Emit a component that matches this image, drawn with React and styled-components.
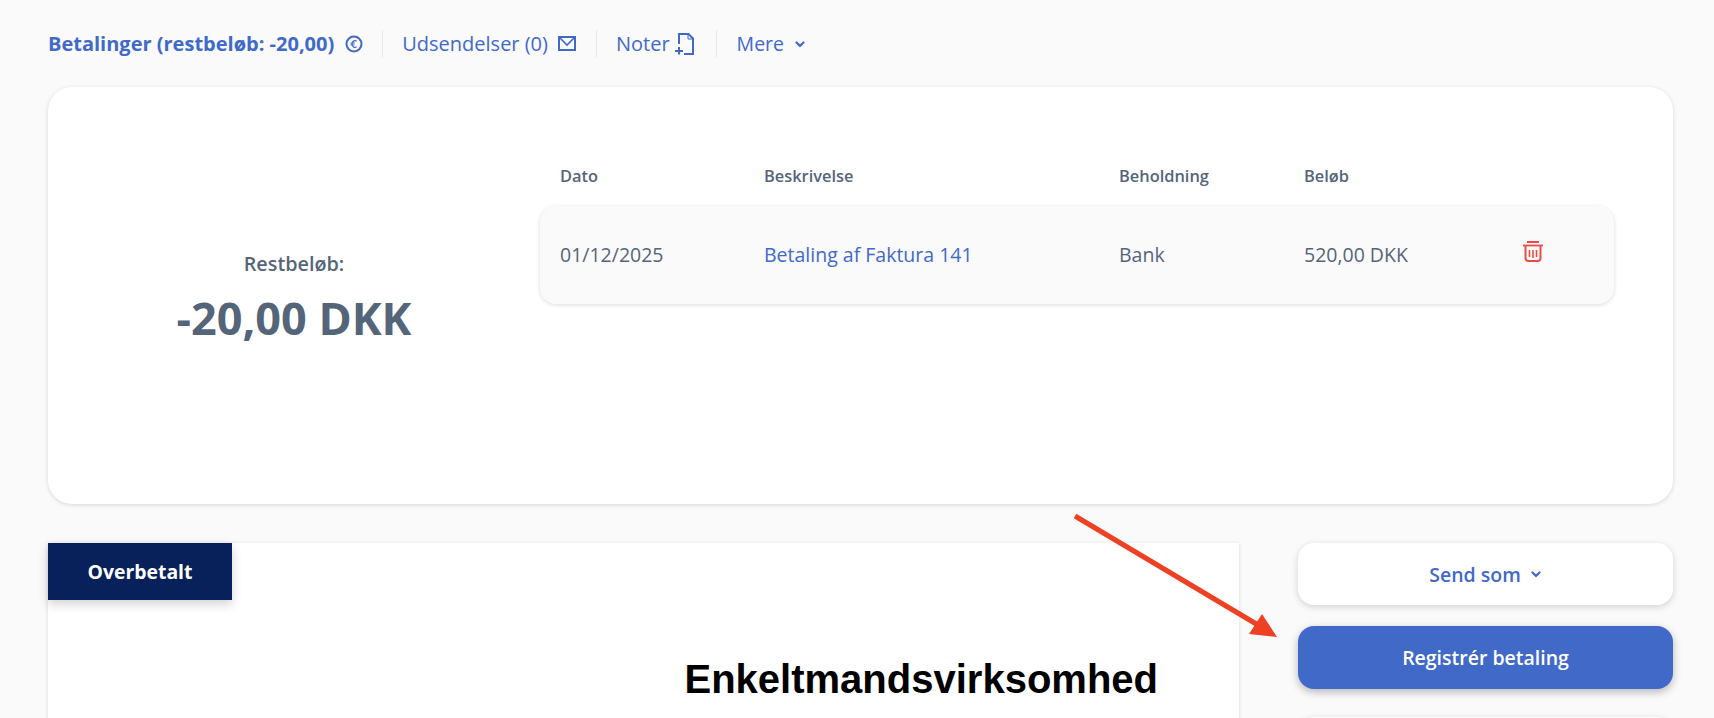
import React from "react";
import styled, { createGlobalStyle } from "styled-components";

const Global = createGlobalStyle`
  html, body { margin: 0; padding: 0; background: #fafafa; }
  body { font-family: "Open Sans", "Noto Sans", sans-serif; color: #556579; }
  * { box-sizing: border-box; }
`;

const Page = styled.div`
  position: relative;
  height: 718px;
  overflow: hidden;
  padding: 30px 41px 0 48px;
  background: #fafafa;
`;

const Tabs = styled.nav`
  display: flex;
  align-items: center;
  height: 27px;
  margin-bottom: 30px;
`;

const Tab = styled.a`
  display: flex;
  align-items: center;
  gap: ${(p) => p.$gap || 10}px;
  height: 27px;
  font-size: ${(p) => p.$size || 20}px;
  font-weight: ${(p) => (p.$active ? 700 : 400)};
  color: #4169c8;
  padding-left: ${(p) => (p.$first ? 0 : p.$pl || 20)}px;
  padding-right: ${(p) => (p.$last ? 0 : p.$pr || 20)}px;
  border-right: ${(p) => (p.$last ? "none" : "1px solid #e8e8e8")};
  white-space: nowrap;
`;

const Card = styled.section`
  display: grid;
  grid-template-columns: 492px 1fr;
  height: 417px;
  padding: 0 59px 0 0;
  background: #fff;
  border-radius: 24px;
  box-shadow: 0 1px 4px rgba(0, 0, 0, 0.14);
`;

const Summary = styled.div`
  display: flex;
  flex-direction: column;
  align-items: center;
  padding: 165px 0 0 0;
`;

const SummaryLabel = styled.div`
  font-size: 19.8px;
  font-weight: 600;
  line-height: 24px;
  margin-bottom: 11px;
`;

const SummaryValue = styled.div`
  font-size: 45px;
  font-weight: 700;
  line-height: 62px;
`;

const TableWrap = styled.div`
  padding-top: 79px;
`;

const columns = "204px 355px 185px 1fr";

const HeadRow = styled.div`
  display: grid;
  grid-template-columns: ${columns};
  padding-left: 20px;
  height: 40px;
  font-size: 16.4px;
  font-weight: 600;
  line-height: 20px;
`;

const Row = styled.div`
  display: grid;
  grid-template-columns: ${columns};
  align-items: center;
  height: 98px;
  padding: 0 0 2px 20px;
  background: #fafafa;
  border-radius: 16px;
  box-shadow: 0 1px 4px rgba(0, 0, 0, 0.14);
  font-size: 19.5px;
`;

const Link = styled.span`
  color: #4169c8;
`;

const AmountCell = styled.div`
  display: flex;
  align-items: center;
  svg {
    margin-top: -5px;
  }
`;

const Amount = styled.span`
  width: 219px;
`;

const Lower = styled.div`
  display: grid;
  grid-template-columns: 1191px 375px;
  gap: 59px;
  margin-top: 39px;
`;

const Doc = styled.article`
  position: relative;
  height: 400px;
  background: #fff;
  box-shadow: 0 1px 4px rgba(0, 0, 0, 0.14);
  padding: 113px 81px 0 0;
  text-align: right;
`;

const Ribbon = styled.div`
  position: absolute;
  left: 0;
  top: 0;
  width: 184px;
  height: 57px;
  display: flex;
  align-items: center;
  justify-content: center;
  background: #08215a;
  color: #fff;
  font-size: 19.4px;
  font-weight: 700;
  box-shadow: 0 4px 10px rgba(0, 0, 0, 0.18);
`;

const Company = styled.h1`
  margin: 0;
  font-family: "Liberation Sans", Arial, sans-serif;
  font-size: 40px;
  font-weight: 700;
  line-height: 46px;
  color: #000;
`;

const Side = styled.aside`
  display: flex;
  flex-direction: column;
  gap: 21px;
`;

const ActionButton = styled.button`
  display: flex;
  align-items: center;
  justify-content: center;
  gap: 9px;
  flex: none;
  width: 100%;
  height: ${(p) => (p.$primary ? 63 : 62)}px;
  margin-top: ${(p) => p.$offset || 0}px;
  border: none;
  border-radius: 16px;
  font-family: inherit;
  font-size: 19.5px;
  font-weight: 600;
  color: ${(p) => (p.$primary ? "#fff" : "#4169c8")};
  background: ${(p) => (p.$primary ? "#4169c8" : "#fff")};
  box-shadow: ${(p) =>
    p.$primary ? "0 3px 8px rgba(0,0,0,0.28)" : "0 2px 7px rgba(0,0,0,0.16)"};
`;

const ArrowLayer = styled.svg`
  position: absolute;
  left: 0;
  top: 0;
  pointer-events: none;
`;

const Chevron = ({ size = 12 }) => (
  <svg width={size} height={size} viewBox="0 0 12 12" fill="none" stroke="#4169c8" strokeWidth="2.2" strokeLinecap="round" strokeLinejoin="round">
    <path d="M2.5 4.5 6 8l3.5-3.5" />
  </svg>
);

const EuroIcon = () => (
  <svg width="18" height="18" viewBox="0 0 18 18" fill="none" stroke="#4169c8">
    <circle cx="9" cy="9" r="7.5" strokeWidth="2" />
    <path d="M11.6 6.2C10 4.9 7.5 5.7 7 9c.4 3.4 3 4.1 4.6 2.8M5.4 8h4.4M5.4 10h4" strokeWidth="1.2" />
  </svg>
);

const MailIcon = () => (
  <svg width="18" height="15" viewBox="0 0 18 15" fill="none" stroke="#4169c8" strokeWidth="2">
    <rect x="1" y="1" width="16" height="13" />
    <path d="M1.5 1.5 9 9l7.5-7.5" strokeWidth="1.6" />
  </svg>
);

const NoteIcon = () => (
  <svg width="19" height="22" viewBox="0 0 19 22" fill="none" stroke="#4169c8" strokeWidth="2">
    <path d="M4 11V1h9.5L18 5.5V21H9" />
    <path d="M13 1v5h5" strokeWidth="1" />
    <path d="M4 14v7.5M0 18h8" />
  </svg>
);

const TrashIcon = () => (
  <svg width="20" height="21" viewBox="0 0 20 21" fill="none" stroke="#ee4b46">
    <path d="M4 1h12" strokeWidth="2" />
    <path d="M0 4.5h20" strokeWidth="1.8" />
    <path d="M2.5 5v12a3 3 0 0 0 3 3h9a3 3 0 0 0 3-3V5" strokeWidth="2" />
    <path d="M6.5 9v7M10 9v8M13.5 9v7" strokeWidth="1.6" />
  </svg>
);

export default function App() {
  return (
    <>
      <Global />
      <Page>
        <Tabs>
          <Tab $active $first $gap={11} $pr={19}>Betalinger (restbeløb: -20,00) <EuroIcon /></Tab>
          <Tab $pl={19}>Udsendelser (0) <MailIcon /></Tab>
          <Tab $pl={19} $pr={22} $gap={5}>Noter <NoteIcon /></Tab>
          <Tab $last $gap={10} $size={19.5}>Mere <Chevron /></Tab>
        </Tabs>
        <Card>
          <Summary>
            <SummaryLabel>Restbeløb:</SummaryLabel>
            <SummaryValue>-20,00 DKK</SummaryValue>
          </Summary>
          <TableWrap>
            <HeadRow>
              <div>Dato</div>
              <div>Beskrivelse</div>
              <div>Beholdning</div>
              <div>Beløb</div>
            </HeadRow>
            <Row>
              <div>01/12/2025</div>
              <Link>Betaling af Faktura 141</Link>
              <div>Bank</div>
              <AmountCell>
                <Amount>520,00 DKK</Amount>
                <TrashIcon />
              </AmountCell>
            </Row>
          </TableWrap>
        </Card>
        <Lower>
          <Doc>
            <Ribbon>Overbetalt</Ribbon>
            <Company>Enkeltmandsvirksomhed</Company>
          </Doc>
          <Side>
            <ActionButton>Send som <Chevron /></ActionButton>
            <ActionButton $primary>Registrér betaling</ActionButton>
            <ActionButton $offset={7} aria-label="Flere handlinger" />
          </Side>
        </Lower>
        <ArrowLayer width="1714" height="718" viewBox="0 0 1714 718">
          <path d="M1075 516 1258 625" stroke="#ee4023" strokeWidth="5" fill="none" />
          <path d="M1277 637 1249 634 1262 614Z" fill="#ee4023" />
        </ArrowLayer>
      </Page>
    </>
  );
}
